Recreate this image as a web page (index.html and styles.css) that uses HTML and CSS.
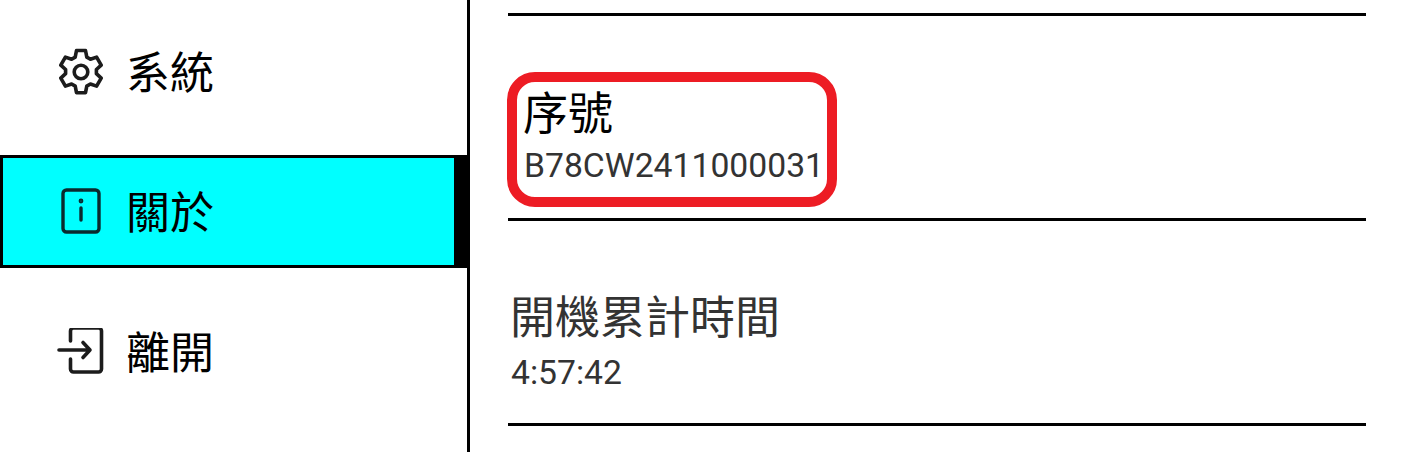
FILE: index.html
```html
<!DOCTYPE html>
<html lang="zh-Hant">
<head>
<meta charset="utf-8">
<title>關於</title>
<link rel="stylesheet" href="styles.css">
</head>
<body>
<div class="app">
  <nav class="sidebar">
    <div class="item">
      <svg class="icon" viewBox="0 0 48 48" fill="none" stroke="#1c1c1c" stroke-width="3.6" stroke-linejoin="round"><path d="M19.5 2.500h9l1.3 6.600 3.600 2.100 6.200-2.100 4.600 8-4.800 4.400v4.200l4.800 4.400-4.600 8-6.200-2.100-3.600 2.100-1.300 6.600h-9l-1.300-6.600-3.600-2.100-6.200 2.100-4.600-8 4.800-4.400v-4.200l-4.800-4.400 4.600-8 6.200 2.100 3.600-2.100z"/><circle cx="24" cy="24" r="6.800"/></svg>
      <span class="label">系統</span>
    </div>
    <div class="item active">
      <svg class="icon" viewBox="0 1 48 48" fill="none" stroke="#0a2a2e" stroke-width="3.4" stroke-linecap="round"><rect x="6" y="3" width="36" height="42" rx="3.5"/><path d="M24 21v12"/><circle cx="24" cy="14" r="1" stroke-width="2.8"/></svg>
      <span class="label">關於</span>
    </div>
    <div class="item">
      <svg class="icon" viewBox="0 2 48 48" fill="none" stroke="#1c1c1c" stroke-width="3.6" stroke-linecap="round" stroke-linejoin="round"><path d="M13.500 15V5a3 3 0 0 1 3-3H41.500a3 3 0 0 1 3 3v38a3 3 0 0 1-3 3H16.500a3 3 0 0 1-3-3V33"/><path d="M2 24h31M26 16.500l7 7.500-7 7.500"/></svg>
      <span class="label">離開</span>
    </div>
  </nav>
  <main class="content">
    <section class="row">
      <h2 class="title">序號</h2>
      <p class="value">B78CW2411000031</p>
      <div class="highlight"></div>
    </section>
    <section class="row dim">
      <h2 class="title">開機累計時間</h2>
      <p class="value">4:57:42</p>
    </section>
  </main>
</div>
</body>
</html>
```
FILE: styles.css
```css
html, body {
  margin: 0;
  padding: 0;
  background: #fff;
}
.app {
  display: flex;
  width: 1404px;
  height: 452px;
  overflow: hidden;
  font-family: "Noto Sans CJK TC", Roboto, sans-serif;
}
.sidebar {
  box-sizing: border-box;
  width: 470px;
  height: 452px;
  border-right: 3px solid #000;
  padding-top: 15px;
  display: flex;
  flex-direction: column;
  gap: 27px;
}
.item {
  box-sizing: border-box;
  height: 113px;
  display: flex;
  align-items: center;
  padding-left: 57px;
  gap: 21px;
  color: #000;
  border-top: 3px solid transparent;
  border-bottom: 3px solid transparent;
}
.item.active {
  width: 470px;
  background: #0ff;
  border: 3px solid #000;
  border-right-width: 16px;
  padding-left: 54px;
}
.icon {
  width: 48px;
  height: 48px;
  flex: none;
  filter: blur(0.4px);
}
.label {
  font-size: 44px;
  line-height: 60px;
  padding-bottom: 3px;
}
.content {
  width: 858px;
  margin-left: 38px;
  padding-top: 13px;
}
.row {
  position: relative;
  box-sizing: border-box;
  height: 205px;
  border-top: 3px solid #000;
}
.row:last-child {
  height: 208px;
  border-bottom: 3px solid #000;
}
.title {
  margin: 0;
  padding-top: 65px;
  padding-left: 15px;
  font-size: 45px;
  font-weight: 400;
  line-height: 60px;
  color: #000;
}
.value {
  margin: 6px 0 0;
  padding-left: 16px;
  font-family: Roboto, sans-serif;
  font-size: 33.7px;
  line-height: 38px;
  color: #333;
}
.dim .title {
  padding-top: 64px;
  padding-left: 2px;
  color: #333;
}
.dim .value {
  margin-top: 9px;
  padding-left: 3px;
}
.highlight {
  position: absolute;
  left: -1px;
  top: 56px;
  width: 330px;
  height: 135px;
  box-sizing: border-box;
  border: 10px solid #ed1c24;
  border-radius: 28px;
}
```
